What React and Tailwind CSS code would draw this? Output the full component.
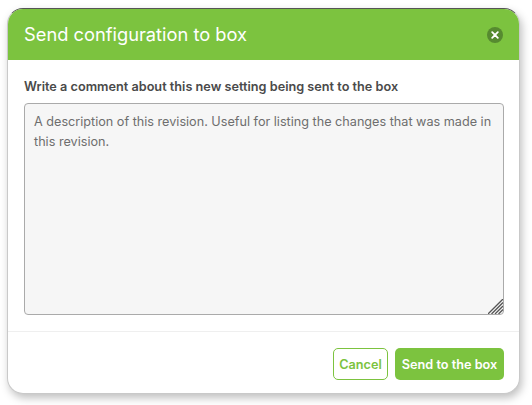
const App = () => {
    return (
        <div className="h-[405px] w-[532px] bg-white pt-2 pl-[7px] font-['Inter',sans-serif]">
            <div className="w-[513px] h-[386px] flex flex-col bg-white rounded-2xl overflow-hidden border-x border-b border-t border-[#c9c9c9] border-t-[#555] shadow-[2px_4px_8px_rgba(0,0,0,0.25)]">
                <div className="h-[51px] shrink-0 bg-[#7cc33f] flex items-center justify-between pl-4 pr-4">
                    <h1 className="text-[18.3px] font-normal text-white">Send configuration to box</h1>
                    <button className="w-4 h-4 rounded-full bg-[#568a30] flex items-center justify-center">
                        <svg width="8" height="8" viewBox="0 0 8 8">
                            <path d="M1.2 1.2 6.8 6.8M6.8 1.2 1.2 6.8" stroke="#fff" strokeWidth="1.8" strokeLinecap="round" />
                        </svg>
                    </button>
                </div>
                <div className="px-4 pt-[18px] pb-4 border-b border-[#efefef]">
                    <label className="block text-[12.7px] leading-[18px] font-semibold text-[#4a4a4a] mb-[7px]">
                        Write a comment about this new setting being sent to the box
                    </label>
                    <div className="relative w-[480px] h-[212px]">
                        <textarea
                            className="block w-full h-full resize-none px-[9px] pt-2 pb-[7px] text-[12.65px] leading-5 bg-[#f6f6f6] border border-[#aaa] rounded-[4px] text-[#6e6e6e] placeholder:text-[#6e6e6e] outline-none"
                            placeholder="A description of this revision. Useful for listing the changes that was made in this revision."
                        />
                        <svg className="absolute right-[1px] bottom-[1px]" width="15" height="15" viewBox="0 0 15 15">
                            <path d="M0 15 15 0M3.5 15 15 3.5M7 15 15 7M10.5 15 15 10.5" stroke="#555" strokeWidth="1.3" />
                        </svg>
                    </div>
                </div>
                <div className="flex justify-end gap-[7px] pt-4 pr-[15px]">
                    <button className="h-8 w-[55px] pt-px rounded-[5px] border border-[#7cc33f] bg-white text-[12.7px] font-semibold text-[#7cc33f]">
                        Cancel
                    </button>
                    <button className="h-8 w-[109px] pt-px rounded-[5px] bg-[#7cc33f] text-[12.7px] font-semibold text-white">
                        Send to the box
                    </button>
                </div>
            </div>
        </div>
    )
}
export default App;
